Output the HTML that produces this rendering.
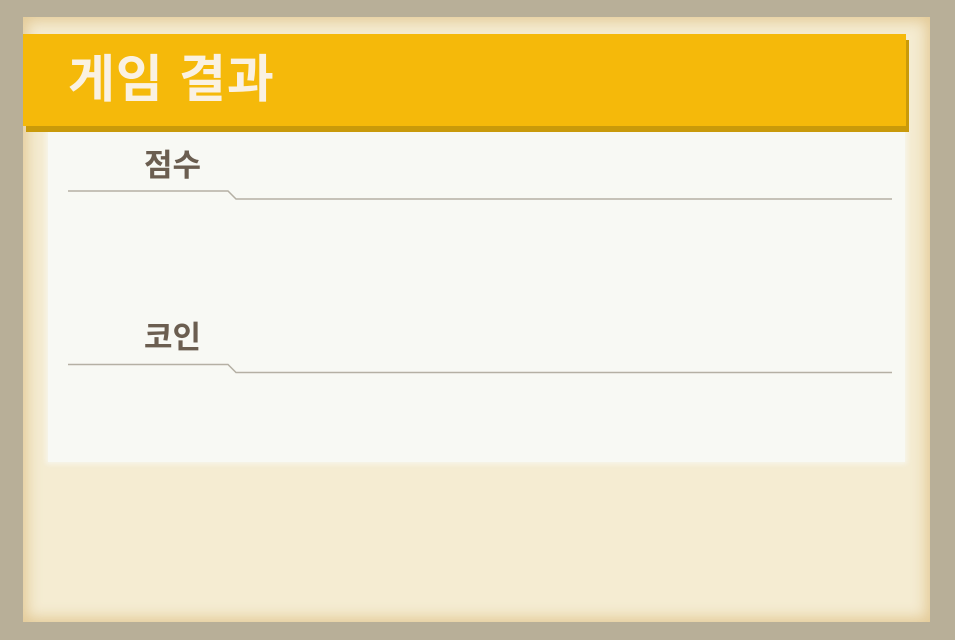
<!DOCTYPE html>
<html><head><meta charset="utf-8"><style>
html,body{margin:0;padding:0;width:955px;height:640px;overflow:hidden;background:#b8af98;font-family:"Liberation Sans","Noto Sans CJK KR",sans-serif}
.panel{position:absolute;left:23px;top:17px;width:907px;height:605px;background:#f5ecd2;box-shadow:inset 0 0 14px 4px rgba(220,190,130,.75)}
.content{position:absolute;left:48px;top:131px;width:857px;height:331px;background:#f8f9f4;box-shadow:0 0 6px 3px #f8f9f4 inset, 0 0 5px 2px rgba(248,249,244,.8)}
.sh{position:absolute;left:26px;top:40px;width:883px;height:92px;background:#c99a0a}
.bar{position:absolute;left:23px;top:34px;width:883px;height:92px;background:#f5b90a}
.title{position:absolute;left:68px;top:47px;font-size:51px;font-weight:bold;color:#faf1e2;line-height:66px;letter-spacing:1px}
.h{position:absolute;left:144px;font-size:31px;font-weight:bold;color:#6b5e50;line-height:38px}
svg{position:absolute;left:0;top:0}
</style></head><body>
<div class="panel"></div>
<div class="content"></div>
<div class="sh"></div>
<div class="bar"></div>
<div class="title">게임 결과</div>
<div class="h" style="top:147px">점수</div>
<div class="h" style="top:319px">코인</div>
<svg width="955" height="640"><g fill="none" stroke="#b5b0a4" stroke-width="1.5">
<path d="M68 191H228L236 199H892"/><path d="M68 364.5H228L236 372.5H892"/></g></svg>
</body></html>
